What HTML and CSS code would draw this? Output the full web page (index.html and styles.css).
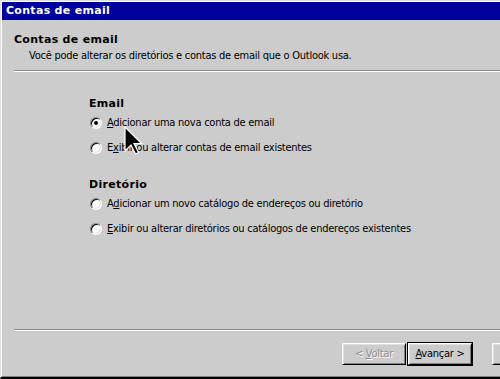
FILE: index.html
```html
<!DOCTYPE html>
<html lang="pt">
<head>
<meta charset="utf-8">
<title>Contas de email</title>
<link rel="stylesheet" href="styles.css">
</head>
<body>
<div class="window">
  <div class="frame">
    <div class="titlebar">Contas de email</div>
    <div class="header">
      <div class="h-title">Contas de email</div>
      <div class="h-sub">Você pode alterar os diretórios e contas de email que o Outlook usa.</div>
    </div>
    <div class="sep"></div>
    <div class="content">
      <div class="group">
        <div class="g-title">Email</div>
        <div class="radio"><span class="rb"><span class="dot"></span></span><span class="label"><u>A</u>dicionar uma nova conta de email</span></div>
        <div class="radio"><span class="rb"></span><span class="label">E<u>x</u>ibir ou alterar contas de email existentes</span></div>
      </div>
      <div class="group">
        <div class="g-title">Diretório</div>
        <div class="radio"><span class="rb"></span><span class="label">A<u>d</u>icionar um novo catálogo de endereços ou diretório</span></div>
        <div class="radio"><span class="rb"></span><span class="label"><u>E</u>xibir ou alterar diretórios ou catálogos de endereços existentes</span></div>
      </div>
    </div>
    <div class="sep"></div>
    <div class="buttons">
      <div class="btn disabled">&lt; <u>V</u>oltar</div>
      <div class="btn default"><u>A</u>vançar &gt;</div>
      <div class="btn cancel"></div>
    </div>
    <svg class="cursor" width="19" height="30" viewBox="0 0 19 30">
      <polygon points="1,1 1,25 7,19 11.5,28 14.5,26.5 10,17.5 17.5,17.5" fill="#000" stroke="#fff" stroke-width="1.2" stroke-linejoin="miter"/>
    </svg>
  </div>
</div>
</body>
</html>
```

FILE: styles.css
```css
* { box-sizing: border-box; }
html, body {
  margin: 0;
  padding: 0;
  width: 500px;
  height: 379px;
  overflow: hidden;
  background: #cccccc;
}
body {
  font-family: "DejaVu Sans Condensed", "DejaVu Sans", sans-serif;
  font-stretch: condensed;
  font-size: 11px;
  letter-spacing: -0.25px;
  color: #000;
}
.window {
  width: 500px;
  height: 379px;
  overflow: hidden;
  border-top: 1px solid #dfdfdf;
  border-left: 1px solid #dfdfdf;
  border-bottom: 2px solid #000;
  background: #cccccc;
}
.frame {
  position: relative;
  height: 100%;
  border-top: 1px solid #fff;
  border-left: 1px solid #fff;
  border-bottom: 1px solid #808080;
  display: flex;
  flex-direction: column;
}
.titlebar,
.h-title,
.g-title {
  font-family: "DejaVu Sans", sans-serif;
  font-stretch: normal;
  font-weight: bold;
  font-size: 11px;
  letter-spacing: 0.3px;
}
.titlebar {
  height: 18px;
  background: #00009c;
  color: #fff;
  line-height: 18px;
  padding-left: 4px;
}
.header {
  padding: 13px 0 0 12px;
  height: 50px;
}
.h-title {
  line-height: 14px;
}
.h-sub {
  margin-top: 2px;
  padding-left: 15px;
  line-height: 14px;
}
.sep {
  margin-left: 12px;
  height: 2px;
  flex: none;
  border-top: 1px solid #8c8c8c;
  border-bottom: 1px solid #fff;
}
.content {
  height: 257px;
  flex: none;
  padding: 25px 0 0 87px;
  display: flex;
  flex-direction: column;
  gap: 18px;
}
.group {
  display: flex;
  flex-direction: column;
}
.g-title {
  line-height: 14px;
  height: 13px;
}
.radio {
  display: flex;
  align-items: center;
  height: 25px;
  line-height: 14px;
}
.rb {
  width: 12px;
  height: 12px;
  flex: none;
  border-radius: 50%;
  border: 1px solid;
  border-color: #808080 #fff #fff #808080;
  margin-left: 1px;
  margin-right: 5px;
  display: flex;
  align-items: center;
  justify-content: center;
  background: #fff;
  box-shadow: inset 1px 1px 0 #000, inset -1px -1px 0 #dfdfdf;
}
.dot {
  width: 4px;
  height: 4px;
  border-radius: 50%;
  background: #000;
}
.buttons {
  display: flex;
  padding: 12px 0 0 340px;
  align-items: flex-start;
}
.btn {
  width: 64px;
  height: 22px;
  line-height: 20px;
  text-align: center;
  border: 1px solid;
  border-color: #fff #000 #000 #fff;
  box-shadow: inset 1px 1px 0 #dfdfdf, inset -1px -1px 0 #808080;
  background: #cccccc;
  flex: none;
}
.btn.disabled {
  color: #8c8c8c;
  text-shadow: 1px 1px 0 #fff;
}
.btn.default {
  margin-left: 2px;
  outline: 1px solid #000;
}
.btn.cancel {
  margin-left: 20px;
  width: 75px;
}
.cursor {
  position: absolute;
  left: 122px;
  top: 124px;
}
```
